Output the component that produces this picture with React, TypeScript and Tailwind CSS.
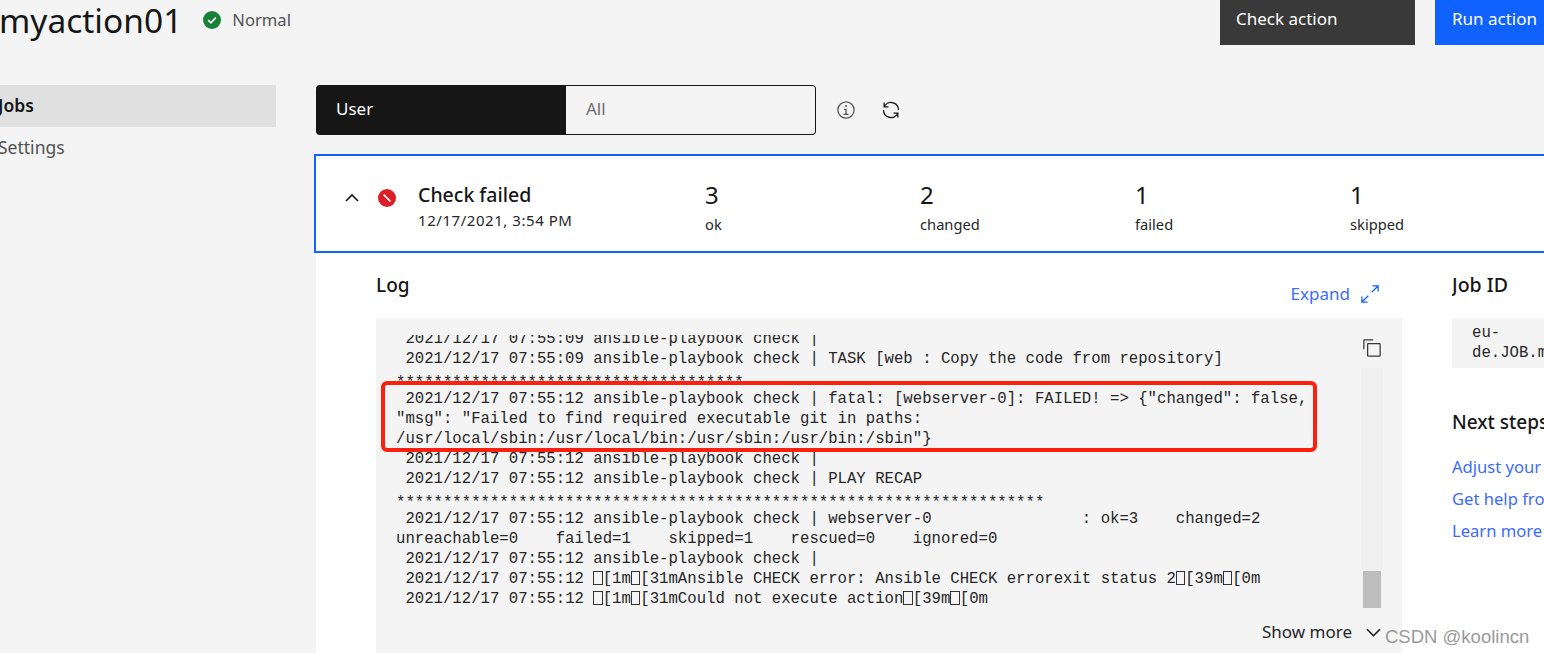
const sans = "font-['Noto_Sans','Open_Sans',sans-serif]";

function Tofu() {
  return <span className="inline-block w-[1ch] h-[14px] align-[-2px] border border-[#333]" />;
}

const ts = " 2021/12/17 07:55:";

function Stars({ n }: { n: number }) {
  return <span className="relative top-[4px]">{"*".repeat(n)}</span>;
}

const logLines: React.ReactNode[] = [
  ts + "09 ansible-playbook check |",
  ts + "09 ansible-playbook check | TASK [web : Copy the code from repository]",
  <Stars n={37} />,
  ts + '12 ansible-playbook check | fatal: [webserver-0]: FAILED! => {"changed": false,',
  '"msg": "Failed to find required executable git in paths:',
  '/usr/local/sbin:/usr/local/bin:/usr/sbin:/usr/bin:/sbin"}',
  ts + "12 ansible-playbook check |",
  ts + "12 ansible-playbook check | PLAY RECAP",
  <Stars n={69} />,
  ts + "12 ansible-playbook check | webserver-0                : ok=3    changed=2",
  "unreachable=0    failed=1    skipped=1    rescued=0    ignored=0",
  ts + "12 ansible-playbook check |",
  <>{ts}12 <Tofu />[1m<Tofu />[31mAnsible CHECK error: Ansible CHECK errorexit status 2<Tofu />[39m<Tofu />[0m</>,
  <>{ts}12 <Tofu />[1m<Tofu />[31mCould not execute action<Tofu />[39m<Tofu />[0m</>,
];

const stats = [
  ["3", "ok"],
  ["2", "changed"],
  ["1", "failed"],
  ["1", "skipped"],
];

export default function App() {
  return (
    <div className={`relative w-[1544px] h-[653px] overflow-hidden bg-[#f4f4f4] text-[#161616] ${sans}`}>
      {/* Header */}
      <header className="flex h-[45px] items-start">
        <h1 className="-ml-[1px] text-[33.5px] leading-[40px] font-normal whitespace-nowrap">myaction01</h1>
        <div className="ml-[21px] mt-[10px] flex items-center">
          <svg width="18" height="18" viewBox="0 0 18 18">
            <circle cx="9" cy="9" r="9" fill="#198038" />
            <path d="M5.2 9.2 L7.9 11.8 L12.8 6.6" fill="none" stroke="#fff" strokeWidth="1.6" />
          </svg>
          <span className="ml-[11px] text-[16.6px] leading-[20px] text-[#525252]">Normal</span>
        </div>
        <div className="ml-auto flex h-[45px] text-white text-[17px] leading-[38px]">
          <div className="w-[195px] bg-[#393939] pl-[16px]">Check action</div>
          <div className="ml-[20px] w-[109px] bg-[#0f62fe] pl-[17px] whitespace-nowrap">Run action</div>
        </div>
      </header>

      <div className="flex">
        {/* Sidebar */}
        <nav className="w-[316px] shrink-0 pt-[40px] text-[17.5px]">
          <div className="flex h-[42px] w-[276px] items-center bg-[#e0e0e0] pb-[2px] font-semibold -indent-[2px]">Jobs</div>
          <div className="flex h-[42px] w-[276px] items-center pb-[1px] -indent-[2px] text-[#525252]">Settings</div>
        </nav>

        {/* Main */}
        <main className="w-[1228px] shrink-0">
          <div className="mt-[40px] flex h-[50px] items-center">
            <div className="flex h-[50px] w-[250px] items-center rounded-l-[4px] bg-[#161616] pb-[3px] pl-[20px] text-[17px] text-white">User</div>
            <div className="flex h-[50px] w-[250px] items-center rounded-r-[4px] border border-l-0 border-[#161616] pb-[3px] pl-[20px] text-[17px] text-[#6f6f6f]">All</div>
            <svg className="ml-[20px]" width="20" height="20" viewBox="0 0 32 32" fill="#525252">
              <polygon points="17 22 17 14 13 14 13 16 15 16 15 22 12 22 12 24 20 24 20 22 17 22" />
              <path d="M16,8a1.5,1.5,0,1,0,1.5,1.5A1.5,1.5,0,0,0,16,8Z" />
              <path d="M16,30A14,14,0,1,1,30,16,14,14,0,0,1,16,30ZM16,4A12,12,0,1,0,28,16,12,12,0,0,0,16,4Z" />
            </svg>
            <svg className="ml-[25px]" width="20" height="20" viewBox="0 0 32 32" fill="#161616">
              <path d="M12,10H6.78A11,11,0,0,1,27,16h2A13,13,0,0,0,6,7.68V4H4v8h8Z" />
              <path d="M20,22h5.22A11,11,0,0,1,5,16H3a13,13,0,0,0,23,8.32V28h2V20H20Z" />
            </svg>
          </div>

          {/* Job card */}
          <section className="mt-[19px] -ml-[2px] flex h-[99px] w-[1240px] items-start border-2 border-[#0f62fe] bg-white">
            <svg className="ml-[29px] mt-[35px] shrink-0" width="14" height="14" viewBox="0 0 14 14">
              <path d="M1 10 L7 4 L13 10" fill="none" stroke="#161616" strokeWidth="1.6" />
            </svg>
            <svg className="ml-[19px] mt-[33px] shrink-0" width="18" height="18" viewBox="0 0 18 18">
              <circle cx="9" cy="9" r="9" fill="#da1e28" />
              <path d="M5.6 5.6 L12.4 12.4" stroke="#fff" strokeWidth="1.6" />
            </svg>
            <div className="ml-[22px] mt-[27px] w-[287px] shrink-0">
              <div className="text-[19.5px] leading-[24px] font-medium">Check failed</div>
              <div className="mt-[3px] text-[15px] leading-[20px] tracking-[0.55px] text-[#262626]">12/17/2021, 3:54 PM</div>
            </div>
            {stats.map(([n, l]) => (
              <div key={l} className="mt-[24px] w-[215px] shrink-0">
                <div className="text-[24px] leading-[30px]">{n}</div>
                <div className="mt-[4px] text-[14.7px] leading-[20px] text-[#262626]">{l}</div>
              </div>
            ))}
          </section>

          {/* Detail */}
          <section className="flex h-[400px] bg-white pl-[60px]">
            <div className="w-[1026px] shrink-0">
              <div className="flex h-[65px] items-start justify-between">
                <h2 className="mt-[20px] text-[19px] leading-[24px] font-medium">Log</h2>
                <div className="mt-[31px] mr-[22px] flex items-center">
                  <span className="text-[17px] leading-[20px] text-[#3b6cff]">Expand</span>
                  <svg className="ml-[10px]" width="20" height="20" viewBox="0 0 32 32" fill="#0f62fe">
                    <polygon points="20 2 20 4 26.59 4 18 12.59 19.41 14 28 5.41 28 12 30 12 30 2 20 2" />
                    <polygon points="14 19.41 12.59 18 4 26.59 4 20 2 20 2 30 12 30 12 28 5.41 28 14 19.41" />
                  </svg>
                </div>
              </div>
              <div className="relative flex h-[335px] bg-[#f4f4f4]">
                <div className="mt-[17px] h-[276px] w-[985px] shrink-0 overflow-hidden pl-[20px]">
                  <pre className="-mt-[6px] font-['Liberation_Mono',monospace] text-[15.67px] leading-[20px] text-[#262626]">
                    {logLines.map((l, i) => (
                      <div key={i} className="h-[20px]">{l}</div>
                    ))}
                  </pre>
                </div>
                <div className="flex w-[22px] shrink-0 flex-col">
                  <svg className="mt-[20px] ml-[1px]" width="20" height="20" viewBox="0 0 32 32" fill="#393939">
                    <path d="M28,10V28H10V10H28m0-2H10a2,2,0,0,0-2,2V28a2,2,0,0,0,2,2H28a2,2,0,0,0,2-2V10a2,2,0,0,0-2-2Z" />
                    <path d="M4,18H2V4A2,2,0,0,1,4,2H18V4H4Z" />
                  </svg>
                  <div className="mt-[10px] flex h-[240px] flex-col justify-end bg-[#f0f0f0] px-[2px]">
                    <div className="h-[37px] bg-[#bdbdbd]" />
                  </div>
                </div>
                <div className="absolute right-[21px] top-[304px] flex items-center text-[17px] leading-[20px] text-[#262626]">
                  Show more
                  <svg className="ml-[14px]" width="15" height="15" viewBox="0 0 14 14">
                    <path d="M1 4 L7 10 L13 4" fill="none" stroke="#161616" strokeWidth="1.5" />
                  </svg>
                </div>
              </div>
            </div>
            <aside className="ml-[50px] w-[92px] shrink-0 overflow-hidden whitespace-nowrap">
              <h2 className="mt-[20px] text-[19.5px] leading-[24px] font-medium">Job ID</h2>
              <div className="mt-[21px] h-[50px] bg-[#f4f4f4] pl-[20px] pt-[5px] font-['Liberation_Mono',monospace] text-[15.67px] leading-[20px] text-[#262626]">
                <div>eu-</div>
                <div>de.JOB.m</div>
              </div>
              <h2 className="mt-[42px] text-[19px] leading-[24px] font-medium">Next steps</h2>
              <div className="mt-[17px] flex flex-col text-[16.6px] leading-[32px] text-[#3b6cff]">
                <span>Adjust your</span>
                <span>Get help from</span>
                <span>Learn more</span>
              </div>
            </aside>
          </section>
        </main>
      </div>

      {/* Annotation drawn over the screenshot */}
      <div className="absolute left-[381px] top-[381px] h-[71px] w-[936px] rounded-[6px] border-[4px] border-[#fb2010]" />
      {/* Watermark */}
      <div className="absolute left-[1385px] top-[627px] text-[18.5px] leading-[20px] text-[#9a9a9a] font-['Liberation_Sans',sans-serif] whitespace-nowrap">CSDN @koolincn</div>
    </div>
  );
}
